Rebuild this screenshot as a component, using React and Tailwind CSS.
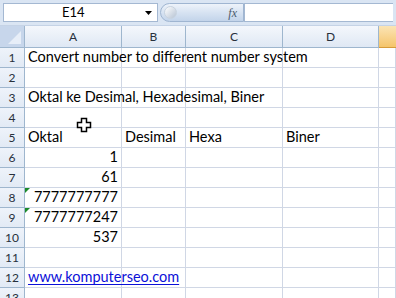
import React from "react";

const cols = [
  { name: "A", w: "w-[97px]" },
  { name: "B", w: "w-[64px]" },
  { name: "C", w: "w-[97px]" },
  { name: "D", w: "w-[96px]" },
];

const rows = [
  { a: "Convert number to different number system", span: true },
  {},
  { a: "Oktal ke Desimal, Hexadesimal, Biner", span: true },
  {},
  { a: "Oktal", b: "Desimal", c: "Hexa", d: "Biner" },
  { a: "1", right: true },
  { a: "61", right: true },
  { a: "7777777777", right: true, flag: true },
  { a: "7777777247", right: true, flag: true },
  { a: "537", right: true },
  {},
  { a: "www.komputerseo.com", link: true, span: true },
  {},
];

const Cell = ({ w, children, right, flag, last }) => (
  <div
    className={`relative h-full shrink-0 ${w} border-r border-b border-[#d0d7e5] bg-white flex items-end pb-[1px] px-[3px] ${
      right ? "justify-end" : ""
    } ${last ? "grow" : ""}`}
  >
    {flag && (
      <div className="absolute left-0 top-0 w-0 h-0 border-t-[5px] border-r-[5px] border-t-[#1b8a2a] border-r-transparent" />
    )}
    {children}
  </div>
);

const App = () => {
  return (
    <div
      className="w-[396px] h-[298px] overflow-hidden bg-white relative text-black"
      style={{ fontFamily: "Lato, 'Noto Sans', sans-serif" }}
    >
      {/* formula bar */}
      <div className="h-[26px] bg-[#dae5f3] flex items-start pt-[3px] px-[3px] border-b border-[#c5d3e6]">
        <div className="w-[155px] h-[19px] bg-white border border-[#a4b8d2] flex items-center relative">
          <span className="absolute left-[58px] text-[13px] leading-none">E14</span>
          <svg className="absolute right-[5px] top-[7px]" width="7" height="4" viewBox="0 0 7 4">
            <path d="M0 0h7L3.5 4z" fill="#000" />
          </svg>
        </div>
        <div className="ml-[2px] w-[84px] h-[19px] rounded-l-full bg-gradient-to-b from-[#eef3fa] via-[#d7e3f2] to-[#c3d4ea] border border-[#9fb5d1] flex items-center justify-end pr-[6px] relative">
          <div className="absolute left-[3px] top-[2px] w-[13px] h-[13px] rounded-full bg-gradient-to-br from-white to-[#b7c4d4] border border-[#c8d3df]" />
          <span className="italic text-[12px] text-[#4b5a6e]" style={{ fontFamily: "'Liberation Serif', serif" }}>
            fx
          </span>
        </div>
        <div className="grow h-[19px] bg-white border border-[#a4b8d2] border-r-0" />
      </div>

      {/* column headers */}
      <div className="flex h-[22px] text-[12px] text-[#27303c]">
        <div className="w-[25px] shrink-0 h-full bg-[#c7d6eb] border-r border-b border-[#9eb6ce] relative">
          <svg className="absolute right-[3px] bottom-[3px]" width="13" height="13" viewBox="0 0 13 13">
            <path d="M13 0V13H0z" fill="#e7eef8" />
          </svg>
        </div>
        {cols.map((c) => (
          <div
            key={c.name}
            className={`${c.w} shrink-0 h-full bg-gradient-to-b from-[#f4f7fc] to-[#dfe8f4] border-r border-b border-[#9eb6ce] flex items-center justify-center`}
          >
            {c.name}
          </div>
        ))}
        <div className="grow h-full bg-gradient-to-b from-[#fbe4b4] to-[#f5c56a] border-b border-[#d69b3b]" />
      </div>

      {/* rows */}
      {rows.map((r, i) => (
        <div key={i} className="flex h-[20px] text-[14.5px] leading-[18px]">
          <div className="w-[25px] shrink-0 h-full bg-gradient-to-b from-[#eef3fa] to-[#e2eaf5] border-r border-b border-[#9eb6ce] flex items-center justify-center text-[12px] text-[#27303c]">
            {i + 1}
          </div>
          <Cell w="w-[97px]" right={r.right} flag={r.flag}>
            {r.span ? (
              <span
                className={`whitespace-nowrap relative z-10 ${
                  r.link ? "text-[#0b10d8] underline underline-offset-[2px]" : ""
                }`}
              >
                {r.a}
              </span>
            ) : (
              r.a
            )}
          </Cell>
          <Cell w="w-[64px]">{r.span ? null : r.b}</Cell>
          <Cell w="w-[97px]">{r.span ? null : r.c}</Cell>
          <Cell w="w-[96px]">{r.span ? null : r.d}</Cell>
          <Cell w="" last />
        </div>
      ))}

      {/* cursor */}
      <svg className="absolute left-[76px] top-[117px]" width="16" height="16" viewBox="0 0 16 16">
        <path
          d="M5.5 1.5h5v4h4v5h-4v4h-5v-4h-4v-5h4z"
          fill="#fff"
          stroke="#000"
          strokeWidth="1.5"
        />
      </svg>
    </div>
  );
};

export default App;
